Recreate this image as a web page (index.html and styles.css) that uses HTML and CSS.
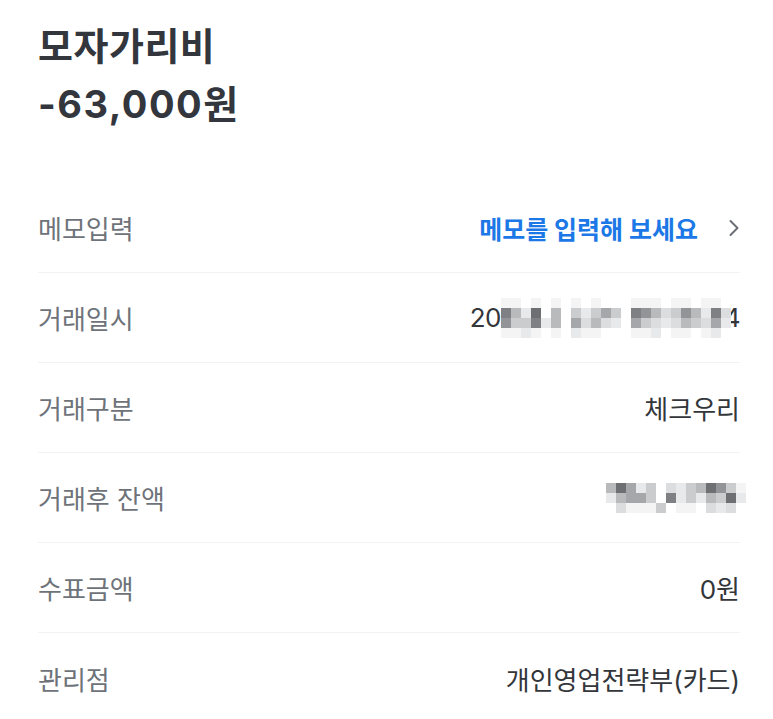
FILE: index.html
```html
<!DOCTYPE html>
<html lang="ko">
<head>
<meta charset="utf-8">
<link rel="stylesheet" href="styles.css">
</head>
<body>
<div class="page">
  <div class="head">
    <div class="title">모자가리비</div>
    <div class="amount"><span class="num">-63,000</span>원</div>
  </div>
  <div class="list">
    <div class="row">
      <div class="label">메모입력</div>
      <div class="value memo"><span class="memo-text">메모를 입력해 보세요</span>
        <svg class="chev" width="12" height="18" viewBox="0 0 12 18"><polyline points="2.5,2 9.5,9 2.5,16" fill="none" stroke="#6b6f75" stroke-width="2" stroke-linecap="round" stroke-linejoin="round"/></svg>
      </div>
    </div>
    <div class="row">
      <div class="label">거래일시</div>
      <div class="value date"><span>20</span><span class="mosaic m23">
        <i class="a"></i><i class="a"></i><i class="w"></i><i class="a"></i><i class="w"></i><i class="a"></i><i class="w"></i><i class="a"></i><i class="w"></i><i class="a"></i><i class="w"></i><i class="w"></i><i class="w"></i><i class="a"></i><i class="a"></i><i class="a"></i><i class="w"></i><i class="a"></i><i class="a"></i><i class="w"></i><i class="a"></i><i class="a"></i><i class="w"></i>
        <i class="h"></i><i class="e"></i><i class="b"></i><i class="i"></i><i class="w"></i><i class="e"></i><i class="w"></i><i class="d"></i><i class="b"></i><i class="d"></i><i class="f"></i><i class="d"></i><i class="w"></i><i class="h"></i><i class="g"></i><i class="e"></i><i class="c"></i><i class="d"></i><i class="g"></i><i class="e"></i><i class="b"></i><i class="h"></i><i class="c"></i>
        <i class="g"></i><i class="d"></i><i class="d"></i><i class="h"></i><i class="b"></i><i class="e"></i><i class="w"></i><i class="f"></i><i class="c"></i><i class="e"></i><i class="c"></i><i class="b"></i><i class="w"></i><i class="f"></i><i class="d"></i><i class="c"></i><i class="b"></i><i class="c"></i><i class="e"></i><i class="d"></i><i class="c"></i><i class="f"></i><i class="b"></i>
        <i class="a"></i><i class="a"></i><i class="b"></i><i class="a"></i><i class="w"></i><i class="a"></i><i class="w"></i><i class="b"></i><i class="a"></i><i class="a"></i><i class="w"></i><i class="w"></i><i class="w"></i><i class="a"></i><i class="a"></i><i class="b"></i><i class="w"></i><i class="a"></i><i class="a"></i><i class="w"></i><i class="a"></i><i class="b"></i><i class="w"></i>
      </span><span class="tail">4</span></div>
    </div>
    <div class="row">
      <div class="label">거래구분</div>
      <div class="value">체크우리</div>
    </div>
    <div class="row">
      <div class="label">거래후 잔액</div>
      <div class="value"><span class="mosaic m14 over">
        <i class="e"></i><i class="i"></i><i class="f"></i><i class="b"></i><i class="d"></i><i class="w"></i><i class="c"></i><i class="b"></i><i class="d"></i><i class="e"></i><i class="i"></i><i class="g"></i><i class="d"></i><i class="a"></i>
        <i class="b"></i><i class="e"></i><i class="f"></i><i class="f"></i><i class="d"></i><i class="w"></i><i class="h"></i><i class="b"></i><i class="d"></i><i class="b"></i><i class="e"></i><i class="d"></i><i class="i"></i><i class="b"></i>
        <i class="w"></i><i class="c"></i><i class="a"></i><i class="a"></i><i class="a"></i><i class="d"></i><i class="w"></i><i class="a"></i><i class="a"></i><i class="w"></i><i class="c"></i><i class="b"></i><i class="c"></i><i class="w"></i>
      </span></div>
    </div>
    <div class="row">
      <div class="label">수표금액</div>
      <div class="value">0원</div>
    </div>
    <div class="row last">
      <div class="label">관리점</div>
      <div class="value">개인영업전략부(카드)</div>
    </div>
  </div>
</div>
</body>
</html>
```

FILE: styles.css
```css
* { box-sizing: border-box; }
html, body { margin: 0; padding: 0; background: #fff; }
body {
  font-family: "Inter", "Noto Sans CJK KR", "Noto Sans", sans-serif;
  width: 773px;
  height: 719px;
  overflow: hidden;
}
.page {
  padding: 17px 33px 0 38px;
}
.head {
  color: #33373d;
  font-weight: 700;
  font-size: 38px;
  line-height: 58px;
}
.title {
  letter-spacing: 0.5px;
}
.num {
  letter-spacing: 1.5px;
}
.list {
  margin-top: 50px;
}
.row {
  height: 90px;
  display: flex;
  align-items: center;
  justify-content: space-between;
  border-bottom: 1px solid #f1f2f3;
  font-size: 26px;
}
.row.last { border-bottom: none; }
.label {
  color: #6e737a;
}
.value {
  color: #33363a;
  display: flex;
  align-items: center;
}
.memo-text {
  color: #1b78e6;
  font-weight: 700;
  font-size: 25px;
}
.chev {
  margin-left: 30px;
}
.mosaic {
  display: grid;
  grid-auto-rows: 10px;
}
.mosaic i { display: block; }
.m23 { grid-template-columns: repeat(23, 10px); }
.m14 { grid-template-columns: repeat(14, 10px); }
.over { margin-right: -6px; }
.date { letter-spacing: -0.5px; }
.tail {
  display: inline-block;
  width: 9px;
  overflow: hidden;
  direction: rtl;
  white-space: nowrap;
}
.w { background: #ffffff; }
.a { background: #f4f4f5; }
.b { background: #e8e9ea; }
.c { background: #dcdddf; }
.d { background: #cbccce; }
.e { background: #b9babc; }
.f { background: #a6a7aa; }
.g { background: #939497; }
.h { background: #7e8084; }
.i { background: #6d6f73; }
```
